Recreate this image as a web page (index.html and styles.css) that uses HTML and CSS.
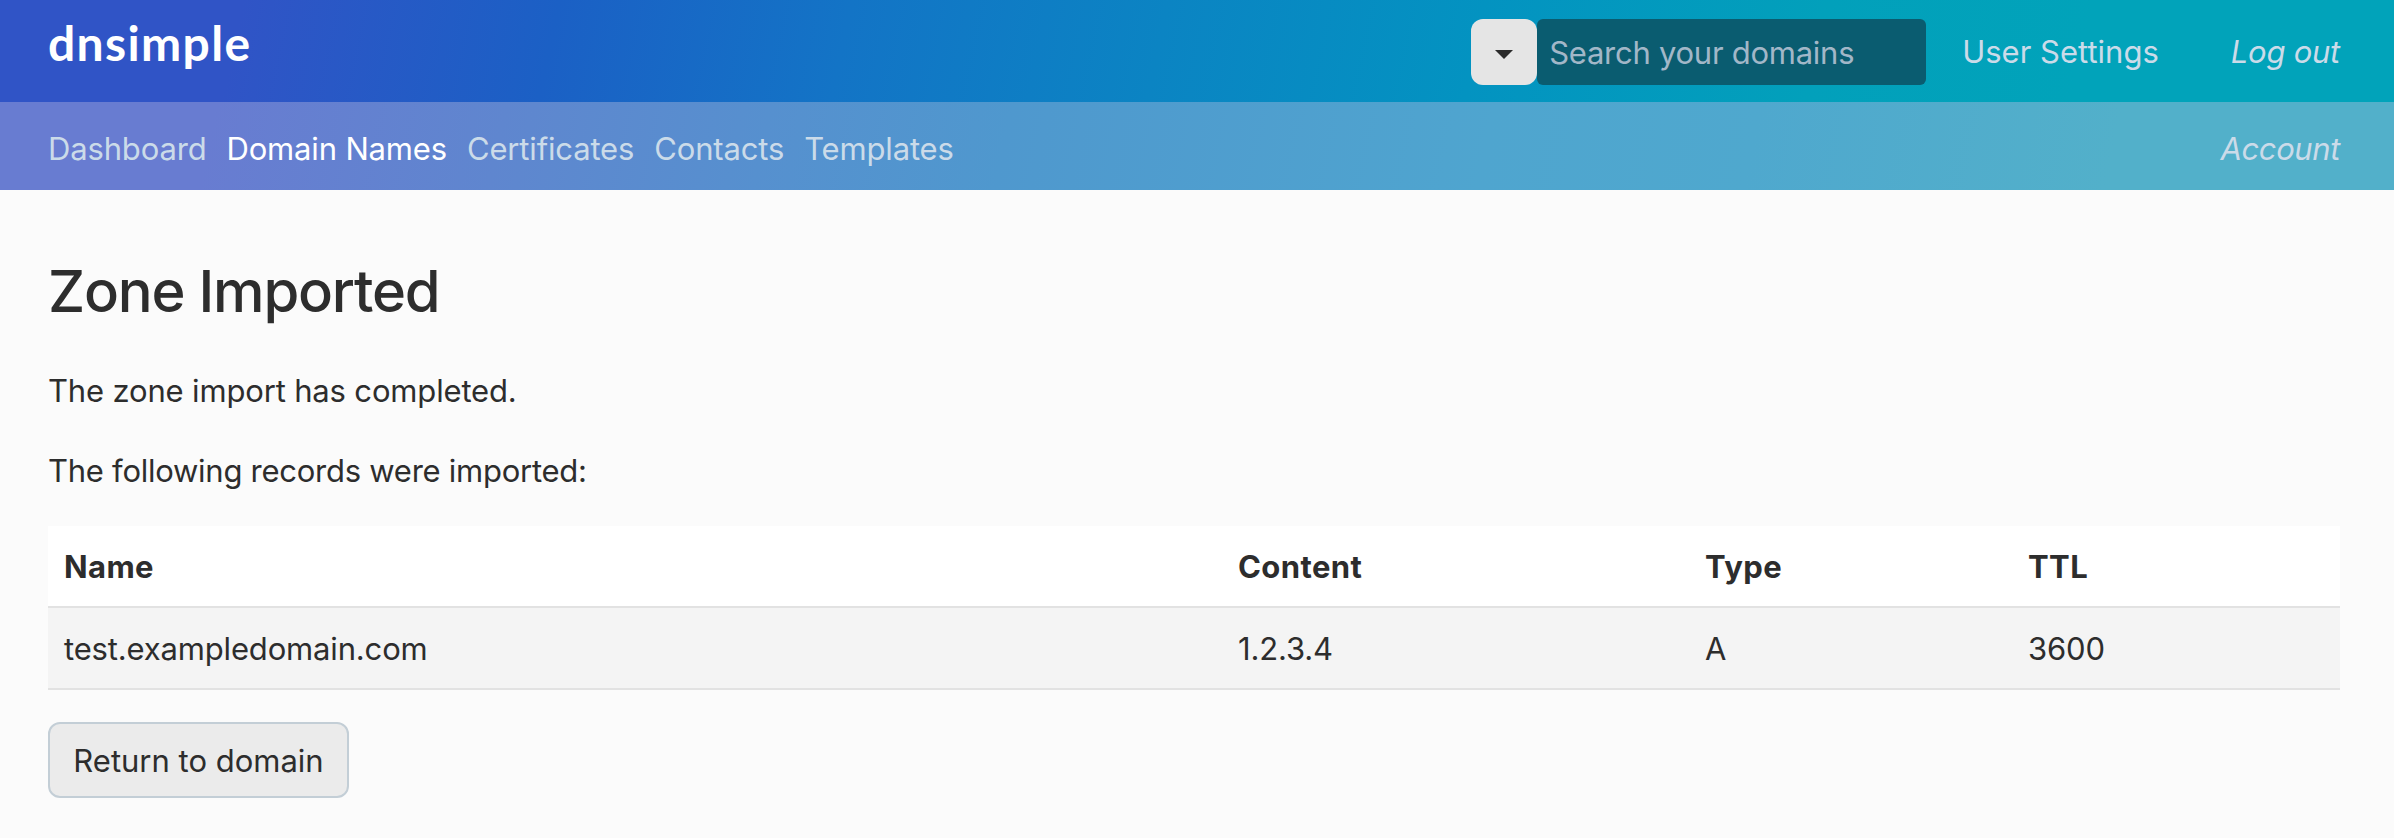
FILE: index.html
```
<!DOCTYPE html>
<html lang="en">
<head>
<meta charset="utf-8">
<title>Zone Imported - DNSimple</title>
<link rel="stylesheet" href="styles.css">
</head>
<body>
<header class="site-header">
  <div class="top-bar">
    <a class="logo">dnsimple</a>
    <div class="top-actions">
      <form class="search">
        <button class="search-toggle" type="button" aria-label="Search options">
          <svg class="caret" viewBox="0 0 18 9" width="18" height="9"><path d="M0 0h18L9 9z"/></svg>
        </button>
        <input class="search-input" type="text" placeholder="Search your domains">
      </form>
      <a class="top-link settings">User Settings</a>
      <a class="top-link logout">Log out</a>
    </div>
  </div>
  <nav class="main-nav">
    <div class="nav-links">
      <a class="nav-link">Dashboard</a>
      <a class="nav-link active">Domain Names</a>
      <a class="nav-link">Certificates</a>
      <a class="nav-link">Contacts</a>
      <a class="nav-link">Templates</a>
    </div>
    <a class="nav-link account">Account</a>
  </nav>
</header>
<main class="content">
  <h1 class="title">Zone Imported</h1>
  <p class="text">The zone import has completed.</p>
  <p class="text following">The following records were imported:</p>
  <table class="records">
    <colgroup><col class="col-name"><col class="col-content"><col class="col-type"><col class="col-ttl"></colgroup>
    <thead>
      <tr><th>Name</th><th>Content</th><th>Type</th><th>TTL</th></tr>
    </thead>
    <tbody>
      <tr><td>test.exampledomain.com</td><td>1.2.3.4</td><td>A</td><td>3600</td></tr>
    </tbody>
  </table>
  <a class="button">Return to domain</a>
</main>
</body>
</html>
```
FILE: styles.css
```
* {
  box-sizing: border-box;
}

body {
  margin: 0;
  min-height: 838px;
  background: #fbfbfb;
  color: #2d2d2d;
  font-family: Inter, "Liberation Sans", sans-serif;
  font-size: 31px;
  line-height: 48px;
  letter-spacing: -0.16px;
}

.site-header {
  background: linear-gradient(102deg, #3054c6 0, #3054c6 10%, #1b60c5 23%, #1374c6 35%, #0b84c3 48%, #0393c1 61%, #02a0bb 75%, #01a3ba 86%);
}

.top-bar {
  display: flex;
  align-items: center;
  justify-content: space-between;
  height: 102px;
  padding: 2px 54px 0 48px;
}

.logo {
  padding-bottom: 18px;
  color: #fff;
  font-family: Lato, sans-serif;
  font-size: 48px;
  font-weight: 700;
  letter-spacing: 1.35px;
}

.top-actions {
  display: flex;
  align-items: center;
}

.search {
  display: flex;
  margin-right: 36px;
}

.search-toggle {
  display: flex;
  align-items: center;
  justify-content: center;
  width: 66px;
  height: 66px;
  padding: 4px 0 0;
  border: 0;
  border-radius: 12px;
  background: #e5e5e5;
}

.caret {
  fill: #2b2b2b;
}

.search-input {
  width: 389px;
  height: 66px;
  padding: 0 12px;
  border: 0;
  border-radius: 6px;
  background: #0a5c70;
  font: inherit;
  letter-spacing: -0.26px;
}

.search-input::placeholder {
  color: #a2b7c8;
  opacity: 1;
}

.top-link,
.nav-link {
  color: #cbdbe9;
}

.settings {
  margin-right: 72px;
  letter-spacing: 0;
}

.logout {
  font-style: italic;
  letter-spacing: -0.25px;
}

.main-nav {
  display: flex;
  align-items: center;
  justify-content: space-between;
  height: 88px;
  padding: 5px 54px 0 48px;
  background: linear-gradient(102deg, #687cd1 0, #687cd1 9%, #5f86cf 21%, #5690cf 32%, #4f98ce 42%, #4fa5cf 62%, #4fa8ce 73%, #52b0ca 88%);
}

.nav-links {
  display: flex;
  gap: 20px;
}

.nav-link.active {
  color: #fff;
}

.account {
  font-style: italic;
  letter-spacing: -0.4px;
}

.content {
  padding: 66px 54px 0 48px;
}

.title {
  margin: 0 0 40px;
  font-size: 58px;
  font-weight: 500;
  line-height: 71px;
  letter-spacing: -1.22px;
}

.text {
  margin: 0 0 32px;
}

.following {
  margin-bottom: 31px;
  letter-spacing: -0.26px;
}

.records {
  width: 100%;
  border-spacing: 0;
  table-layout: fixed;
}

.col-name {
  width: 1174px;
}

.col-content {
  width: 467px;
}

.col-type {
  width: 323px;
}

.records th,
.records td {
  height: 82px;
  padding: 1px 16px 0;
  border-bottom: 2px solid #e2e2e2;
  text-align: left;
}

.records th {
  background: #fff;
  font-weight: 700;
  letter-spacing: 0.4px;
}

.records td {
  background: #f4f4f4;
}

.button {
  display: flex;
  align-items: center;
  justify-content: center;
  width: 301px;
  height: 76px;
  margin-top: 32px;
  padding-top: 1px;
  border: 2px solid #c3ced6;
  border-radius: 12px;
  background: #ebebeb;
  letter-spacing: 0;
}
```
